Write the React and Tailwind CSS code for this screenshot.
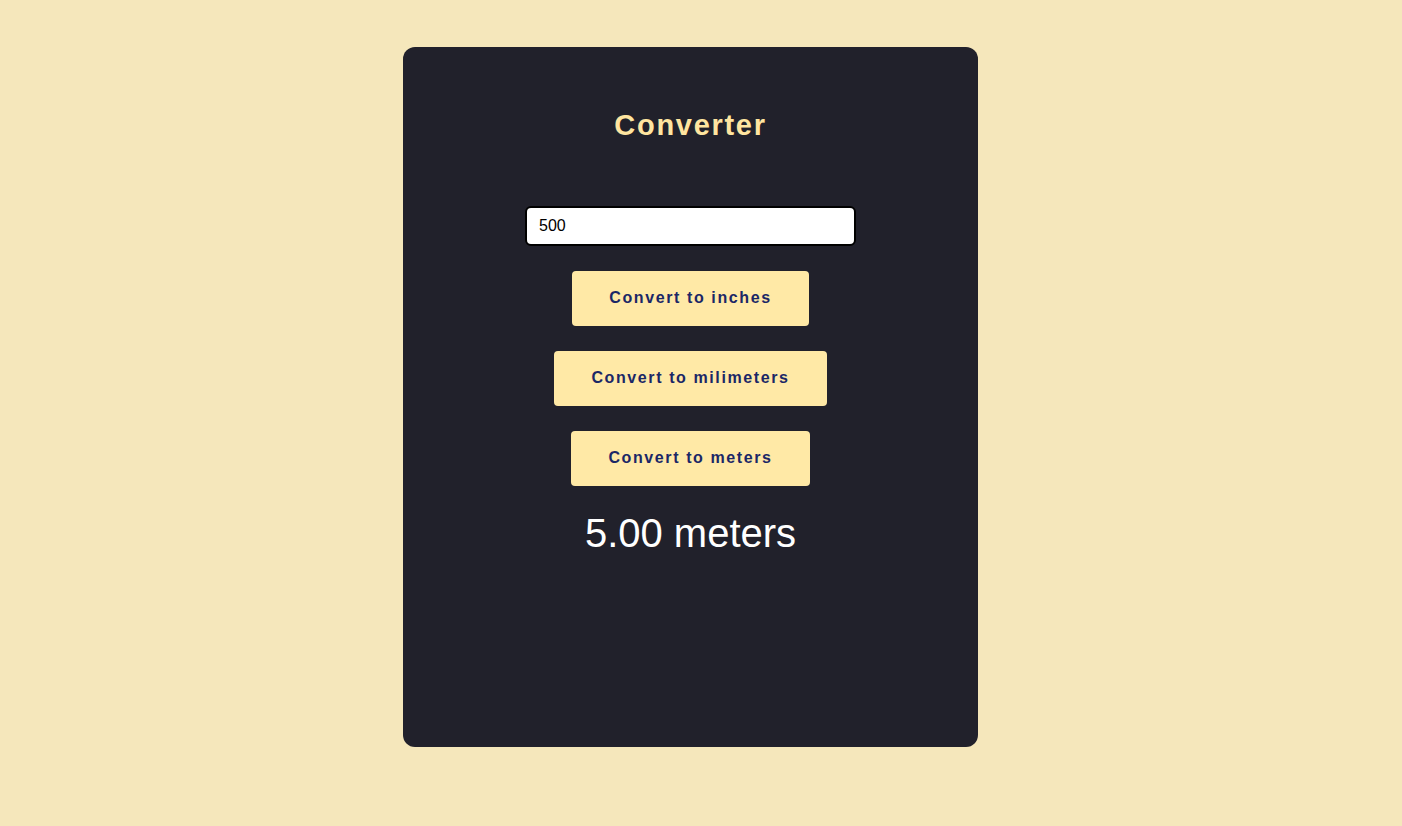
import React, { useState } from 'react';

const App = () => {
  const [value, setValue] = useState('500');
  const [result, setResult] = useState('5.00 meters');

  const convert = (unit) => {
    const cm = parseFloat(value) || 0;
    if (unit === 'inches') setResult(`${(cm / 2.54).toFixed(2)} inches`);
    if (unit === 'milimeters') setResult(`${(cm * 10).toFixed(2)} milimeters`);
    if (unit === 'meters') setResult(`${(cm / 100).toFixed(2)} meters`);
  };

  return (
    <div className="min-h-screen bg-[#f5e7bb] flex justify-center pt-[47px] pr-[21px] font-['Liberation_Sans',Arial,sans-serif]">
      <div className="w-[575px] h-[700px] bg-[#21212b] rounded-[12px] flex flex-col items-center pt-[62px]">
        {/* Title */}
        <h1 className="text-[29px] leading-[33px] font-bold tracking-[1.7px] text-[#ffe5a0]">Converter</h1>

        {/* Input */}
        <input
          type="text"
          value={value}
          onChange={(e) => setValue(e.target.value)}
          className="mt-[64px] w-[331px] h-[40px] border-2 border-black rounded-[6px] bg-white pl-3 text-[16px] text-black outline-none"
        />

        {/* Buttons */}
        <button
          onClick={() => convert('inches')}
          className="mt-[25px] h-[55px] px-[37px] pb-[2px] rounded-[4px] bg-[#ffe9a6] text-[#1b2766] text-[16px] font-bold tracking-[1.6px]"
        >
          Convert to inches
        </button>
        <button
          onClick={() => convert('milimeters')}
          className="mt-[25px] h-[55px] px-[37px] pb-[2px] rounded-[4px] bg-[#ffe9a6] text-[#1b2766] text-[16px] font-bold tracking-[1.6px]"
        >
          Convert to milimeters
        </button>
        <button
          onClick={() => convert('meters')}
          className="mt-[25px] h-[55px] px-[37px] pb-[2px] rounded-[4px] bg-[#ffe9a6] text-[#1b2766] text-[16px] font-bold tracking-[1.6px]"
        >
          Convert to meters
        </button>

        {/* Result */}
        <p className="mt-[24px] text-[40px] leading-[46px] text-white">{result}</p>
      </div>
    </div>
  );
};

export default App;
